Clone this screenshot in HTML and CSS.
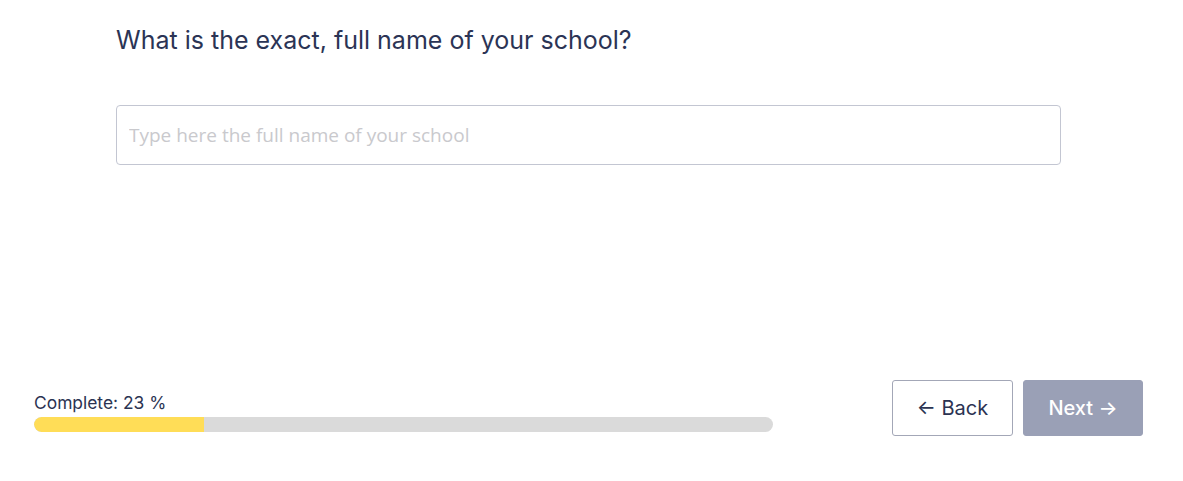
FILE: index.html
```html
<!DOCTYPE html>
<html lang="en">
<head>
<meta charset="utf-8">
<title>School name</title>
<link rel="stylesheet" href="styles.css">
</head>
<body>
<div class="page">
  <main class="question">
    <h1 class="question-title">What is the exact, full name of your school?</h1>
    <input class="answer" type="text" placeholder="Type here the full name of your school">
  </main>
  <footer class="footer">
    <div class="progress">
      <div class="progress-label">Complete: 23 %</div>
      <div class="progress-track"><div class="progress-fill" style="width:23%"></div></div>
    </div>
    <div class="nav">
      <button class="btn btn-back" type="button">&#8592; Back</button>
      <button class="btn btn-next" type="button">Next &#8594;</button>
    </div>
  </footer>
</div>
</body>
</html>
```

FILE: styles.css
```css
* { box-sizing: border-box; }
html, body { margin: 0; padding: 0; background: #fff; }
body { font-family: Inter, "Noto Sans", sans-serif; color: #2b3352; }
.page {
  height: 481px;
  display: flex;
  flex-direction: column;
}
.question {
  padding: 24px 0 0 116px;
}
.question-title {
  margin: 0;
  font-size: 25px;
  font-weight: 400;
  line-height: 32px;
  color: #2b3455;
}
.answer {
  display: block;
  margin-top: 49px;
  width: 945px;
  height: 60px;
  border: 1px solid #c3c6d2;
  border-radius: 4px;
  padding: 0 12px;
  font-family: "Open Sans", "Noto Sans", sans-serif;
  font-size: 19px;
  color: #2b3352;
  outline: none;
}
.answer::placeholder { color: #c9c9cd; }
.footer {
  margin-top: auto;
  display: flex;
  align-items: center;
  justify-content: space-between;
  padding: 0 40px 45px 34px;
}
.progress {
  width: 739px;
  padding-top: 7px;
}
.progress-label {
  font-size: 17.4px;
  line-height: 22px;
  color: #2b3352;
  margin-bottom: 3px;
}
.progress-track {
  height: 15px;
  border-radius: 8px;
  background: #dadada;
  overflow: hidden;
}
.progress-fill {
  height: 100%;
  background: #ffdd57;
  border-radius: 8px 0 0 8px;
}
.nav {
  display: flex;
  gap: 10px;
}
.btn {
  width: 121px;
  height: 56px;
  border-radius: 3px;
  font-family: Inter, "Noto Sans", sans-serif;
  font-size: 20px;
  cursor: pointer;
}
.btn-back {
  background: #fff;
  border: 1px solid #a3a7b7;
  color: #2b3352;
}
.btn-next {
  width: 120px;
  background: #9aa0b6;
  border: 1px solid #9aa0b6;
  color: #fff;
  font-weight: 500;
}
```
